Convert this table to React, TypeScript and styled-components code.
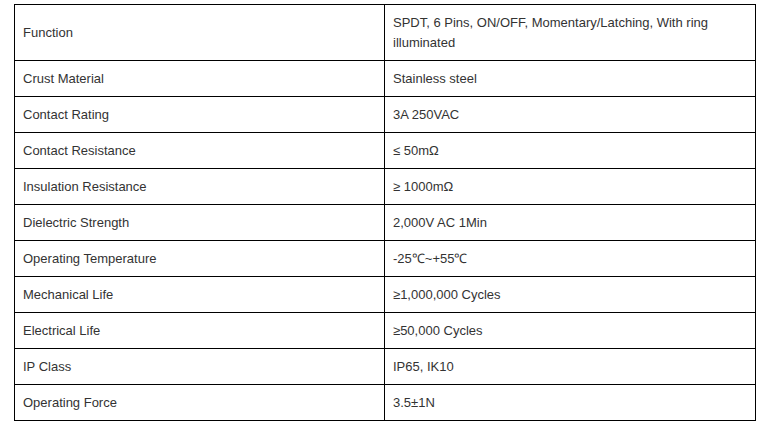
import React from 'react';
import styled, { createGlobalStyle } from 'styled-components';

const GlobalStyle = createGlobalStyle`
  html, body {
    margin: 0;
    padding: 0;
    background: #ffffff;
  }
  body {
    font-family: "Liberation Sans", Arial, sans-serif;
  }
`;

const Page = styled.div`
  padding: 4px 0 0 14px;
`;

const SpecTable = styled.table`
  border-collapse: collapse;
  table-layout: fixed;
  width: 742px;
  font-size: 13px;
  line-height: 20px;
  color: #333333;
`;

const Cell = styled.td`
  border: 1px solid #000000;
  padding: 8px 8px 7px 8px;
  vertical-align: middle;
  text-align: left;
`;

const specs: [string, string][] = [
  ['Function', 'SPDT, 6 Pins, ON/OFF, Momentary/Latching, With ring illuminated'],
  ['Crust Material', 'Stainless steel'],
  ['Contact Rating', '3A 250VAC'],
  ['Contact Resistance', '≤ 50mΩ'],
  ['Insulation Resistance', '≥ 1000mΩ'],
  ['Dielectric Strength', '2,000V AC 1Min'],
  ['Operating Temperature', '-25℃~+55℃'],
  ['Mechanical Life', '≥1,000,000 Cycles'],
  ['Electrical Life', '≥50,000 Cycles'],
  ['IP Class', 'IP65, IK10'],
  ['Operating Force', '3.5±1N'],
];

export default function App() {
  return (
    <>
      <GlobalStyle />
      <Page>
        <SpecTable>
          <colgroup>
            <col style={{ width: 370 }} />
            <col />
          </colgroup>
          <tbody>
            {specs.map(([name, value]) => (
              <tr key={name}>
                <Cell>{name}</Cell>
                <Cell>{value}</Cell>
              </tr>
            ))}
          </tbody>
        </SpecTable>
      </Page>
    </>
  );
}
